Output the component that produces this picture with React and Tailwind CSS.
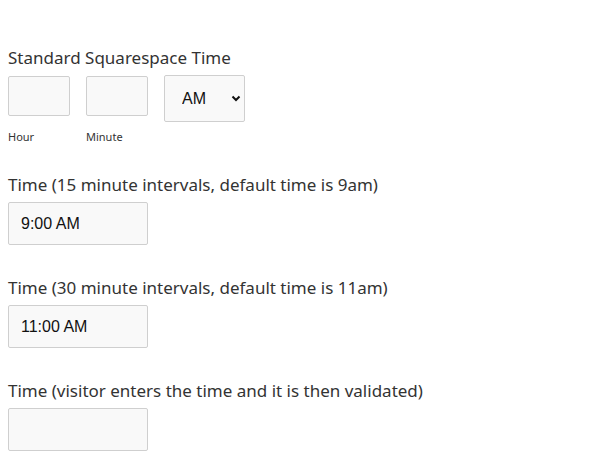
import React from "react";

const labelCls = "text-[17px] leading-[26px] text-[#333] [font-family:'Noto_Sans',Lato,sans-serif]";
const boxCls = "border border-[#cfcfcf] rounded-[2px] bg-[#f9f9f9] [font-family:'Liberation_Sans',Arial,sans-serif] text-[16px] text-[#111] outline-none";

const TimeField = ({ label, value, className = "" }) => (
  <div className={className}>
    <div className={labelCls}>{label}</div>
    <input
      type="text"
      defaultValue={value}
      className={`${boxCls} mt-[4px] block w-[140px] h-[43px] px-[12px]`}
    />
  </div>
);

const App = () => {
  return (
    <div className="bg-white min-h-[460px] px-2 pt-[45px]">
      {/* Standard time with hour / minute / ampm */}
      <div className={labelCls}>Standard Squarespace Time</div>
      <div className="mt-[4px] flex items-start gap-4">
        <input type="text" className={`${boxCls} mt-px block w-[62px] h-[40px]`} />
        <input type="text" className={`${boxCls} mt-px block w-[62px] h-[40px]`} />
        <div className="relative">
          <select
            defaultValue="AM"
            className={`${boxCls} appearance-none block w-[81px] h-[47px] pl-[17px] text-[#000]`}
          >
            <option>AM</option>
            <option>PM</option>
          </select>
          <svg
            className="absolute right-[4px] top-[20px] pointer-events-none"
            width="10"
            height="7"
            viewBox="0 0 10 7"
          >
            <path d="M1.5 1.5 L5 5 L8.5 1.5" fill="none" stroke="#111" strokeWidth="2" />
          </svg>
        </div>
      </div>
      <div className="mt-[7px] flex gap-4 text-[11px] leading-[16px] text-[#333] [font-family:'Noto_Sans',Lato,sans-serif]">
        <div className="w-[62px]">Hour</div>
        <div className="w-[62px]">Minute</div>
      </div>

      <TimeField
        className="mt-[27px]"
        label="Time (15 minute intervals, default time is 9am)"
        value="9:00 AM"
      />
      <TimeField
        className="mt-[30px]"
        label="Time (30 minute intervals, default time is 11am)"
        value="11:00 AM"
      />
      <TimeField
        className="mt-[30px]"
        label="Time (visitor enters the time and it is then validated)"
        value=""
      />
    </div>
  );
};

export default App;
